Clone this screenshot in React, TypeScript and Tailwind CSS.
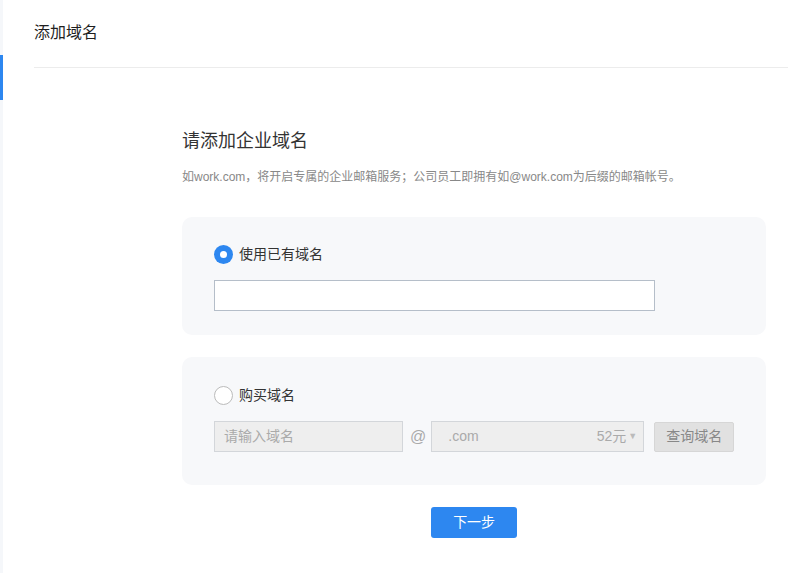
export default function App() {
  const font = { fontFamily: '"Liberation Sans", "Noto Sans CJK SC", sans-serif' };
  return (
    <div className="flex min-h-[573px] w-full bg-white" style={font}>
      {/* left rail */}
      <div className="w-[3px] shrink-0 bg-[#f5f7fa]">
        <div className="mt-[55px] h-[45px] w-[3px] bg-[#2d87f0]" />
      </div>

      <div className="flex flex-1 flex-col">
        <div className="ml-[31px] flex h-[68px] items-start border-b border-[#ececec] pt-[22px]">
          <h1 className="text-[16px] leading-[22px] text-[#1f1f1f]">添加域名</h1>
        </div>

        <div className="ml-[179px] mr-[28px] flex flex-col pt-[61px]">
          <h2 className="text-[18px] leading-[24px] text-[#333]">请添加企业域名</h2>
          <p className="mt-[16px] text-[12px] leading-[16px] text-[#888]">
            如work.com，将开启专属的企业邮箱服务；公司员工即拥有如@work.com为后缀的邮箱帐号。
          </p>

          {/* existing domain */}
          <div className="mt-[32px] flex flex-col gap-[16px] rounded-[10px] bg-[#f7f8fa] px-[32px] pb-[24px] pt-[27px]">
            <label className="flex items-center gap-[6px]">
              <span className="flex h-[19px] w-[19px] items-center justify-center rounded-full bg-[#2d87f0]">
                <span className="h-[7px] w-[7px] rounded-full bg-white" />
              </span>
              <span className="text-[14px] leading-[20px] text-[#333]">使用已有域名</span>
            </label>
            <input
              type="text"
              className="h-[31px] w-[441px] border border-[#b5bec9] bg-white px-2 text-[14px] outline-none"
            />
          </div>

          {/* buy domain */}
          <div className="mt-[22px] flex flex-col gap-[16px] rounded-[10px] bg-[#f7f8fa] px-[32px] pb-[33px] pt-[28px]">
            <label className="flex items-center gap-[6px]">
              <span className="h-[19px] w-[19px] rounded-full border border-[#bbb] bg-white" />
              <span className="text-[14px] leading-[20px] text-[#333]">购买域名</span>
            </label>
            <div className="flex items-center">
              <div className="flex h-[31px] w-[189px] items-center border border-[#d3d6da] bg-[#eeeeee] px-[9px] text-[14px] text-[#aaa]">
                请输入域名
              </div>
              <span className="ml-[7px] mr-[5px] text-[16px] text-[#aaa]">@</span>
              <div className="flex h-[31px] w-[213px] items-center justify-between border border-[#d3d6da] bg-[#eeeeee] pl-[16px] pr-[6px] text-[14px] text-[#aaa]">
                <span>.com</span>
                <span className="flex items-center">
                  52元<span className="ml-[2px] text-[9px] text-[#bbb]">▼</span>
                </span>
              </div>
              <button className="ml-[10px] h-[30px] w-[80px] rounded-[2px] border border-[#d6d6d6] bg-[#e1e1e1] text-[14px] text-[#888]">
                查询域名
              </button>
            </div>
          </div>

          <div className="mt-[22px] flex justify-center">
            <button className="h-[31px] w-[86px] rounded-[3px] bg-[#2d87f0] text-[14px] text-white">下一步</button>
          </div>
        </div>
      </div>
    </div>
  );
}
